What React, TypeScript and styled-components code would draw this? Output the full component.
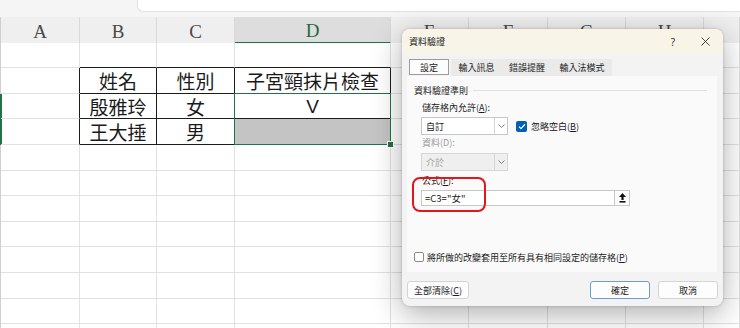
import React from 'react';
import styled, { createGlobalStyle } from 'styled-components';

const Global = createGlobalStyle`
  html, body { margin: 0; padding: 0; background: #fff; }
  body { font-family: "Noto Sans CJK TC", "Noto Sans", sans-serif; }
`;

const CJK = `"Noto Sans CJK TC", "Noto Sans", sans-serif`;
const GRID = '79px 77px 78px 156px 78px 79px 78px 78px 1fr';
const GREEN = '#217346';

const Screen = styled.div`
  position: relative;
  width: 740px;
  height: 328px;
  overflow: hidden;
  background: #fff;
`;

const TopStrip = styled.div`
  height: 17px;
  background: #f5f5f5;
  display: flex;
`;

const SearchBox = styled.div`
  margin-left: 137px;
  flex: 1;
  height: 11px;
  background: #fff;
  border-left: 1px solid #e2e2e2;
  border-bottom: 1px solid #e2e2e2;
  border-bottom-left-radius: 6px;
`;

const Sheet = styled.div`
  border-left: 1px solid #cfcfcf;
`;

const Row = styled.div<{ $h: number }>`
  display: grid;
  grid-template-columns: ${GRID};
  height: ${(p) => p.$h}px;
`;

const HeadCell = styled.div<{ $active?: boolean }>`
  display: flex;
  align-items: center;
  justify-content: center;
  box-sizing: border-box;
  background: ${(p) => (p.$active ? '#dddddd' : '#efefef')};
  border-right: 1px solid #d9d9d9;
  border-bottom: ${(p) => (p.$active ? `2px solid ${GREEN}` : '1px solid #d0d0d0')};
  font-family: "Liberation Serif", serif;
  font-size: 19px;
  color: ${(p) => (p.$active ? '#1d6b40' : '#4a4a4a')};
  padding-top: 3px;
`;

const Cell = styled.div<{ $darkR?: boolean; $darkB?: boolean; $fill?: string; $rowSel?: boolean }>`
  position: relative;
  box-sizing: border-box;
  display: flex;
  align-items: center;
  justify-content: center;
  border-right: 1px solid ${(p) => (p.$darkR ? '#1c1c1c' : '#e1e1e1')};
  border-bottom: 1px solid ${(p) => (p.$darkB ? '#1c1c1c' : '#e1e1e1')};
  background: ${(p) => p.$fill || '#fff'};
  box-shadow: ${(p) => (p.$rowSel ? `-1px 0 0 ${GREEN}, inset 1px 0 0 ${GREEN}` : 'none')};
  font-family: ${CJK};
  font-size: 19px;
  line-height: 1;
  color: #1a1a1a;
`;

const Selection = styled.div`
  position: absolute;
  left: -1px;
  top: -1px;
  right: -1px;
  height: 52px;
  border: 1.5px solid ${GREEN};
  box-sizing: border-box;
  pointer-events: none;
  z-index: 2;
`;

const FillHandle = styled.div`
  position: absolute;
  right: -4px;
  bottom: -4px;
  width: 5px;
  height: 5px;
  background: ${GREEN};
  border: 1px solid #fff;
`;

/* ---------------- Dialog ---------------- */

const Dialog = styled.div`
  position: absolute;
  left: 402px;
  top: 29px;
  width: 321px;
  height: 277px;
  background: #f3f3f3;
  border-radius: 8px;
  box-shadow: 0 8px 30px rgba(0, 0, 0, 0.32), 0 0 3px rgba(0, 0, 0, 0.22);
  display: flex;
  flex-direction: column;
  overflow: hidden;
  font-family: ${CJK};
  font-size: 9px;
  color: #1b1b1b;
  z-index: 5;
`;

const TitleBar = styled.div`
  height: 25px;
  flex: none;
  background: #f8f4e7;
  display: flex;
  align-items: center;
  padding-left: 7px;
  padding-right: 4px;
`;

const Title = styled.div`
  flex: 1;
  font-size: 9px;
`;

const TitleBtn = styled.div<{ $w: number }>`
  width: ${(p) => p.$w}px;
  height: 25px;
  display: flex;
  align-items: center;
  justify-content: center;
  font-family: "Noto Sans", sans-serif;
  font-size: 10px;
  color: #333;
`;

const Tabs = styled.div`
  display: flex;
  margin: 5px 0 0 7px;
  height: 17px;
`;

const Tab = styled.div<{ $w: number; $sel?: boolean }>`
  width: ${(p) => p.$w}px;
  box-sizing: border-box;
  display: flex;
  align-items: center;
  justify-content: center;
  background: ${(p) => (p.$sel ? '#fcfcfc' : '#eaeaea')};
  border: ${(p) => (p.$sel ? '1px solid #9c9c9c' : 'none')};
  height: ${(p) => (p.$sel ? '16px' : '17px')};
  margin-right: ${(p) => (p.$sel ? '2px' : '0')};
  color: #222;
`;

const Panel = styled.div`
  position: relative;
  margin: 0 6px 0 5px;
  height: 196px;
  background: #fafafa;
  box-sizing: border-box;
  padding: 7px 7px 0 7px;
  display: flex;
  flex-direction: column;
`;

const Legend = styled.div`
  display: flex;
  align-items: center;
  height: 14px;
  gap: 5px;
`;

const LegendLine = styled.div`
  flex: 1;
  height: 1px;
  background: #e0e0e0;
  margin-right: 3px;
`;

const Indent = styled.div`
  padding-left: 7px;
  display: flex;
  flex-direction: column;
`;

const Label = styled.div<{ $mt: number; $dim?: boolean }>`
  height: 12px;
  line-height: 12px;
  margin-top: ${(p) => p.$mt}px;
  padding-left: 1px;
  color: ${(p) => (p.$dim ? '#9c9c9c' : '#1b1b1b')};
`;

const Key = styled.span`
  text-decoration: underline;
`;

const Line = styled.div<{ $mt: number }>`
  display: flex;
  align-items: center;
  margin-top: ${(p) => p.$mt}px;
`;

const Select = styled.div<{ $disabled?: boolean }>`
  width: 87px;
  height: 18px;
  box-sizing: border-box;
  display: flex;
  border: 1px solid ${(p) => (p.$disabled ? '#d6d6d6' : '#c6c6c6')};
  background: ${(p) => (p.$disabled ? '#efefef' : '#fff')};
  color: ${(p) => (p.$disabled ? '#a3a3a3' : '#1b1b1b')};
`;

const SelectText = styled.div`
  flex: 1;
  display: flex;
  align-items: center;
  padding-left: 4px;
`;

const SelectArrow = styled.div`
  width: 12px;
  border-left: 1px solid #d6d6d6;
  display: flex;
  align-items: center;
  justify-content: center;
`;

const CheckBox = styled.div<{ $checked?: boolean; $ml?: number }>`
  width: ${(p) => (p.$checked ? 11 : 10)}px;
  height: ${(p) => (p.$checked ? 11 : 10)}px;
  margin-left: ${(p) => p.$ml || 0}px;
  box-sizing: border-box;
  border-radius: 2px;
  background: ${(p) => (p.$checked ? '#005fb8' : '#fff')};
  border: ${(p) => (p.$checked ? 'none' : '1px solid #8a8a8a')};
  display: flex;
  align-items: center;
  justify-content: center;
  flex: none;
`;

const CheckLabel = styled.div<{ $ml: number }>`
  margin-left: ${(p) => p.$ml}px;
  white-space: nowrap;
`;

const Input = styled.div`
  width: 193px;
  height: 16px;
  box-sizing: border-box;
  border: 1px solid #c8c8c8;
  border-right: none;
  background: #fff;
  display: flex;
  align-items: center;
  padding-left: 3px;
  font-size: 9.5px;
`;

const RefBtn = styled.div`
  width: 16px;
  height: 16px;
  box-sizing: border-box;
  border: 1px solid #c8c8c8;
  background: #fbfbfb;
  display: flex;
  align-items: center;
  justify-content: center;
`;

const Highlight = styled.div`
  position: absolute;
  left: 5px;
  top: 101px;
  width: 74px;
  height: 35px;
  box-sizing: border-box;
  border: 2.5px solid #e3161b;
  border-radius: 8px;
  pointer-events: none;
`;

const Spacer = styled.div`
  flex: 1;
`;

const ApplyRow = styled.div`
  display: flex;
  align-items: center;
  height: 10px;
  margin-bottom: 10px;
`;

const Footer = styled.div`
  display: flex;
  padding: 9px 5px 0 5px;
  gap: 8px;
`;

const Button = styled.div<{ $w: number; $primary?: boolean; $push?: boolean }>`
  width: ${(p) => p.$w}px;
  height: 18px;
  box-sizing: border-box;
  border: 1px solid ${(p) => (p.$primary ? '#6d9ccf' : '#d3d3d3')};
  border-radius: 3px;
  background: #fdfdfd;
  display: flex;
  align-items: center;
  justify-content: center;
  margin-left: ${(p) => (p.$push ? 'auto' : '0')};
  color: #1b1b1b;
`;

const Latin = styled.span`
  font-family: "Liberation Sans", sans-serif;
`;

const Chevron = () => (
  <svg width="7" height="4" viewBox="0 0 7 4">
    <polyline points="0.5,0.5 3.5,3.5 6.5,0.5" fill="none" stroke="#6f6f6f" strokeWidth="0.9" />
  </svg>
);

const Tick = () => (
  <svg width="8" height="7" viewBox="0 0 8 7">
    <polyline points="1,3.6 3,5.6 7,1.2" fill="none" stroke="#fff" strokeWidth="1.3" />
  </svg>
);

const CloseIcon = () => (
  <svg width="9" height="9" viewBox="0 0 9 9">
    <line x1="0.5" y1="0.5" x2="8.5" y2="8.5" stroke="#333" strokeWidth="0.9" />
    <line x1="8.5" y1="0.5" x2="0.5" y2="8.5" stroke="#333" strokeWidth="0.9" />
  </svg>
);

const UploadIcon = () => (
  <svg width="7" height="10" viewBox="0 0 7 10">
    <polygon points="3.5,0 7,4 4.6,4 4.6,7 2.4,7 2.4,4 0,4" fill="#111" />
    <rect x="0.5" y="8" width="6" height="1.6" fill="#111" />
  </svg>
);

const LETTERS = ['A', 'B', 'C', 'D', 'E', 'F', 'G', 'H', ''];
const HEIGHTS = [25, 26, 25, 26, 26, 25, 26, 25, 26, 26, 25, 26];
const DATA: Record<string, string> = {
  '1-1': '姓名',
  '1-2': '性別',
  '1-3': '子宮頸抹片檢查',
  '2-1': '殷雅玲',
  '2-2': '女',
  '2-3': 'V',
  '3-1': '王大捶',
  '3-2': '男',
};

export default function App() {
  return (
    <Screen>
      <Global />
      <TopStrip>
        <SearchBox />
      </TopStrip>
      <Sheet>
        <Row $h={26}>
          {LETTERS.map((l, i) => (
            <HeadCell key={i} $active={l === 'D'}>
              {l}
            </HeadCell>
          ))}
        </Row>
        {HEIGHTS.map((h, r) => (
          <Row key={r} $h={h}>
            {LETTERS.map((_, c) => {
              const darkR = r >= 1 && r <= 3 && c <= 3;
              const darkB = c >= 1 && c <= 3 && r <= 3;
              const text = DATA[`${r}-${c}`];
              return (
                <Cell
                  key={c}
                  $darkR={darkR}
                  $darkB={darkB}
                  $fill={r === 3 && c === 3 ? '#c4c4c4' : undefined}
                  $rowSel={c === 0 && (r === 2 || r === 3)}
                >
                  {text === 'V' ? <Latin>V</Latin> : text}
                  {r === 2 && c === 3 && (
                    <Selection>
                      <FillHandle />
                    </Selection>
                  )}
                </Cell>
              );
            })}
          </Row>
        ))}
      </Sheet>

      <Dialog>
        <TitleBar>
          <Title>資料驗證</Title>
          <TitleBtn $w={20}>?</TitleBtn>
          <TitleBtn $w={8} />
          <TitleBtn $w={28}>
            <CloseIcon />
          </TitleBtn>
        </TitleBar>
        <Tabs>
          <Tab $w={40} $sel>設定</Tab>
          <Tab $w={51}>輸入訊息</Tab>
          <Tab $w={50}>錯誤提醒</Tab>
          <Tab $w={60}>輸入法模式</Tab>
        </Tabs>
        <Panel>
          <Legend>
            資料驗證準則
            <LegendLine />
          </Legend>
          <Indent>
            <Label $mt={5}>
              儲存格內允許(<Key>A</Key>):
            </Label>
            <Line $mt={3}>
              <Select>
                <SelectText>自訂</SelectText>
                <SelectArrow>
                  <Chevron />
                </SelectArrow>
              </Select>
              <CheckBox $checked $ml={8}>
                <Tick />
              </CheckBox>
              <CheckLabel $ml={4}>
                忽略空白(<Key>B</Key>)
              </CheckLabel>
            </Line>
            <Label $mt={2} $dim>
              資料(D):
            </Label>
            <Line $mt={4}>
              <Select $disabled>
                <SelectText>介於</SelectText>
                <SelectArrow>
                  <Chevron />
                </SelectArrow>
              </Select>
            </Line>
            <Label $mt={4}>
              公式(<Key>F</Key>):
            </Label>
            <Line $mt={3}>
              <Input>=C3="女"</Input>
              <RefBtn>
                <UploadIcon />
              </RefBtn>
            </Line>
          </Indent>
          <Spacer />
          <ApplyRow>
            <CheckBox />
            <CheckLabel $ml={3}>
              將所做的改變套用至所有具有相同設定的儲存格(<Key>P</Key>)
            </CheckLabel>
          </ApplyRow>
          <Highlight />
        </Panel>
        <Footer>
          <Button $w={62}>
            全部清除(<Key>C</Key>)
          </Button>
          <Button $w={60} $primary $push>
            確定
          </Button>
          <Button $w={60}>取消</Button>
        </Footer>
      </Dialog>
    </Screen>
  );
}
